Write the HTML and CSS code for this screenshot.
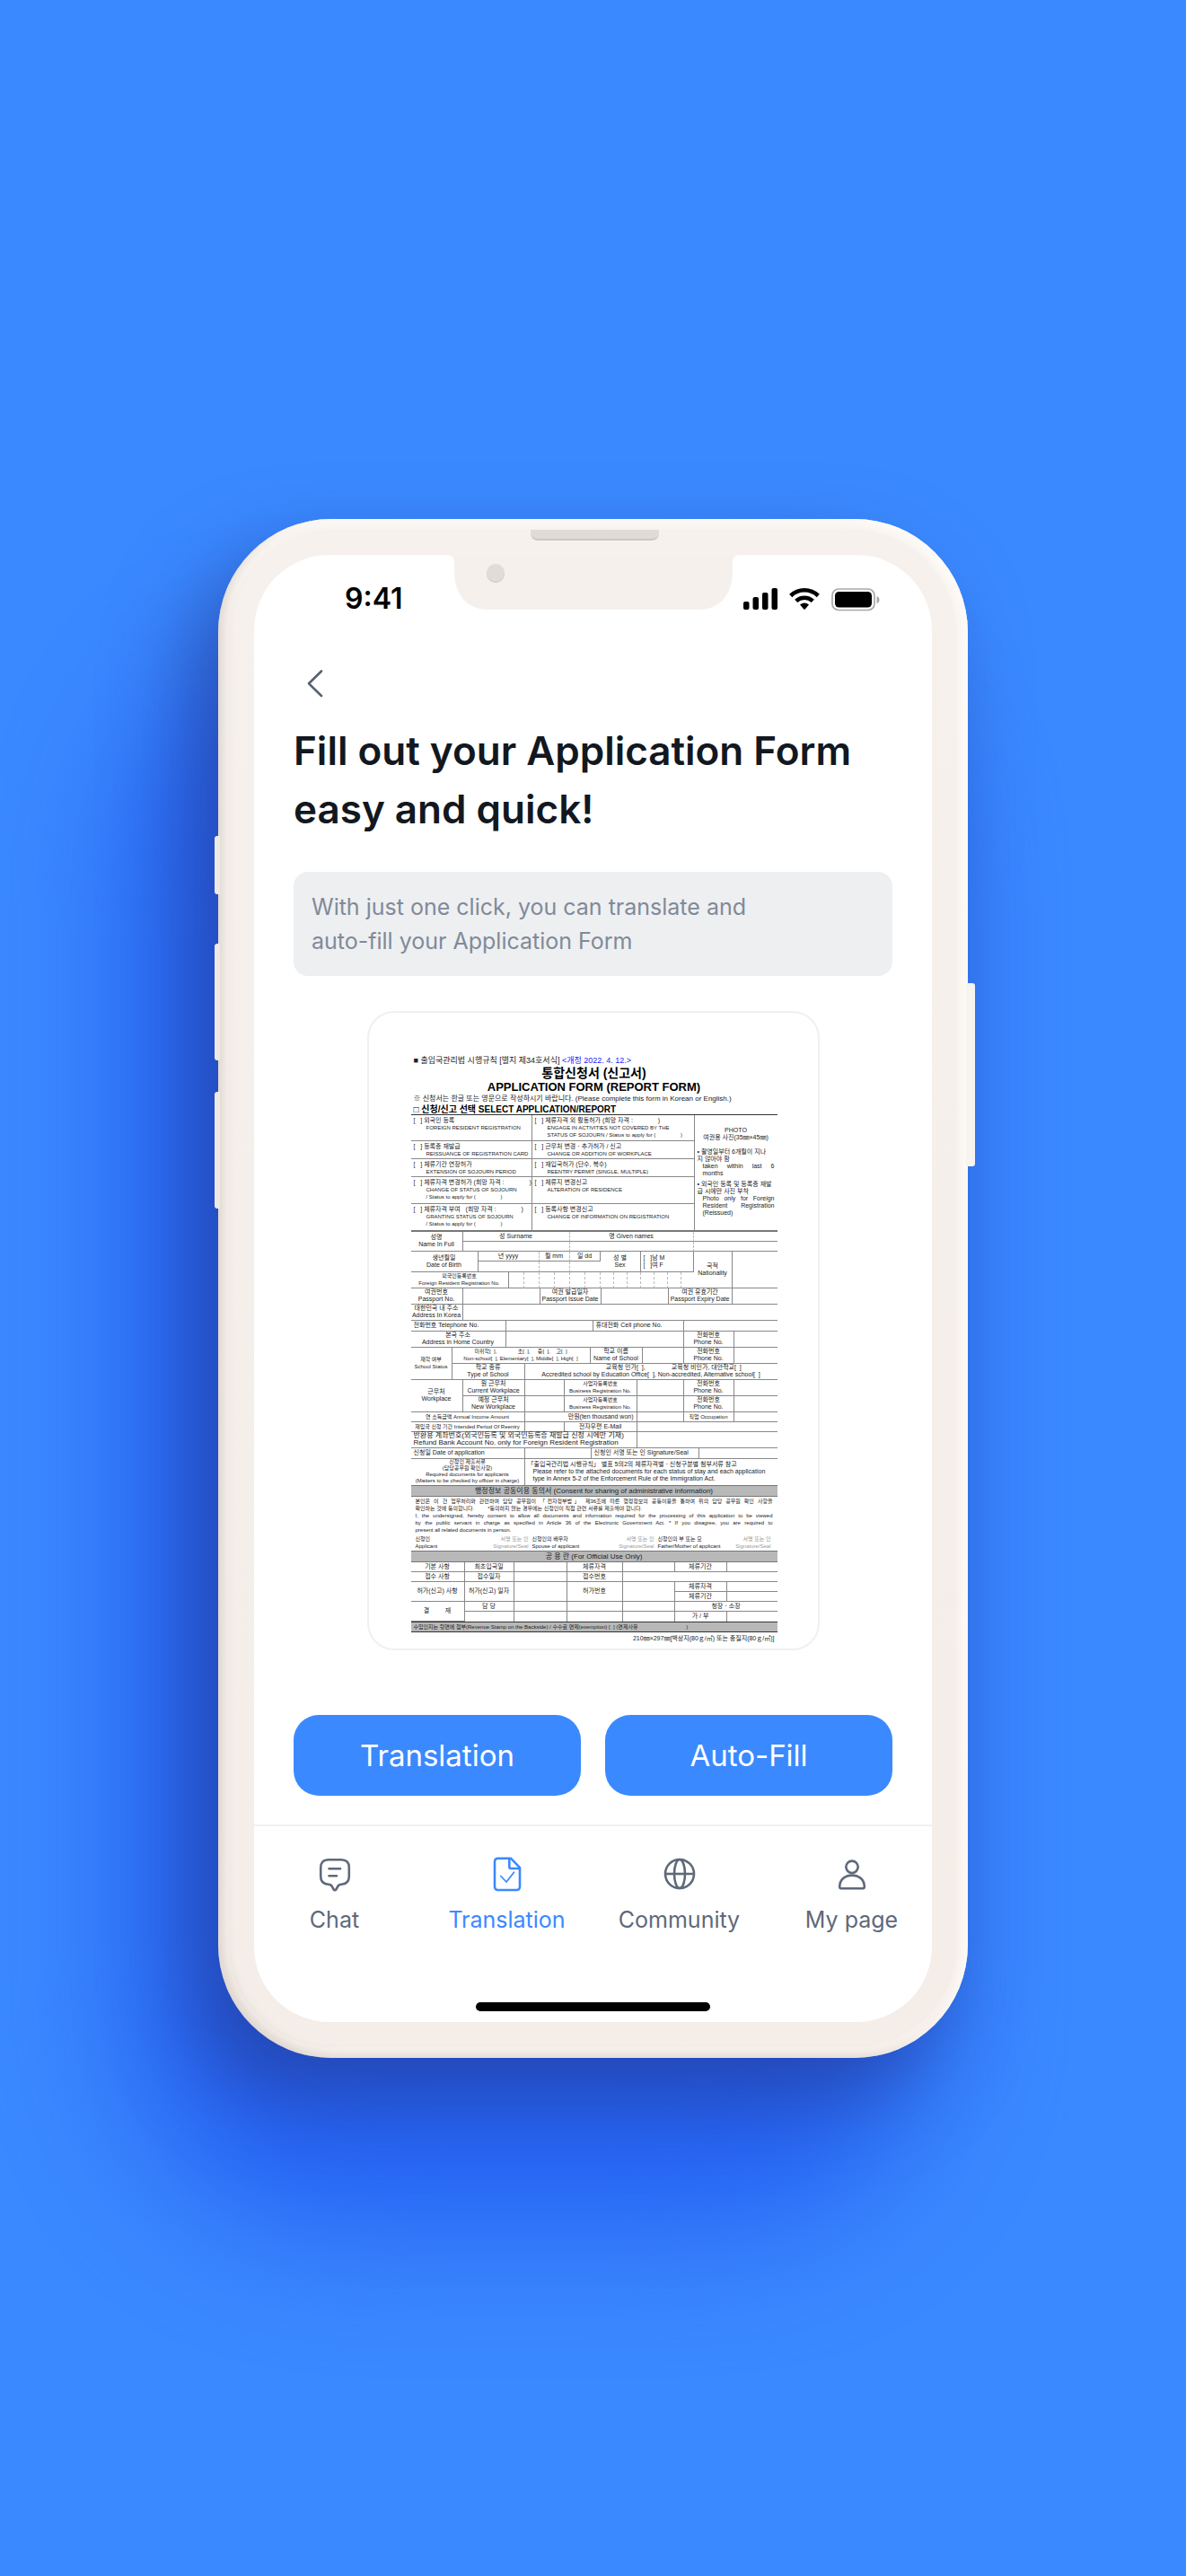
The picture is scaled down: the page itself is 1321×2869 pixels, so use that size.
FILE: index.html
```html
<!DOCTYPE html>
<html lang="en">
<head>
<meta charset="utf-8">
<title>Application Form</title>
<meta name="viewport" content="width=device-width, initial-scale=1">
<link rel="stylesheet" href="styles.css">
</head>
<body>
<div class="phone">
  <span class="side side-mute"></span>
  <span class="side side-up"></span>
  <span class="side side-down"></span>
  <span class="side side-power"></span>
  <span class="speaker"></span>
  <div class="screen">
    <header class="status">
      <time class="clock">9:41</time>
      <svg class="notch" viewBox="0 0 326 61" width="326" height="61" aria-hidden="true">
        <path fill="#f5f0ec" d="M0 0C5 0 8 3 8 9V18C8 44 22 61 46 61H280C304 61 318 44 318 18V9C318 3 321 0 326 0Z"/>
        <circle cx="54" cy="21" r="10" fill="#cbc7c4"/>
        <circle cx="54" cy="20" r="10" fill="#e0dcd9"/>
      </svg>
      <div class="signals">
        <svg width="38" height="24" viewBox="0 0 38 24" aria-hidden="true"><rect y="15" width="6.500" height="9" rx="2"/><rect x="10.500" y="10" width="6.500" height="14" rx="2"/><rect x="21" y="5" width="6.500" height="19" rx="2"/><rect x="31.500" width="6.500" height="24" rx="2"/></svg>
        <svg width="34" height="24" viewBox="0 0 34 24" aria-hidden="true"><g fill="none" stroke="#000" stroke-width="4.600"><path d="M1.700 8.500A22 22 0 0 1 32.300 8.500"/><path d="M7.700 14.400A13.500 13.500 0 0 1 26.300 14.400"/></g><path d="M12 18.500Q17 14.300 22 18.500L17.700 23.400Q17 24 16.300 23.400Z"/></svg>
        <svg width="54" height="26" viewBox="0 0 54 26" aria-hidden="true"><rect x="1" y="1" width="47" height="23.500" rx="7" fill="none" stroke="#a9a9a9" stroke-width="1.700"/><rect x="4" y="4" width="41" height="17.500" rx="4.500"/><path fill="#a9a9a9" d="M50.500 9Q53.500 10 53.500 13T50.500 17Z"/></svg>
      </div>
    </header>

    <main class="content">
      <button class="back" type="button" aria-label="Back">
        <svg width="20" height="32" viewBox="0 0 20 32" aria-hidden="true"><path d="M17 2.500 3 16.300 17 30" fill="none" stroke="#576171" stroke-width="2.600" stroke-linecap="round" stroke-linejoin="round"/></svg>
      </button>
      <h1>Fill out your Application Form<br>easy and quick!</h1>
      <p class="hint">With just one click, you can translate and<br>auto-fill your Application Form</p>

      <article class="sheet" lang="ko">
        <p class="legal"><b>■</b> 출입국관리법 시행규칙 [별지 제34호서식] <span class="rev">&lt;개정 2022. 4. 12.&gt;</span></p>
        <h2>통합신청서 (신고서)</h2>
        <h3>APPLICATION FORM (REPORT FORM)</h3>
        <p class="note">※ 신청서는 한글 또는 영문으로 작성하시기 바랍니다. (Please complete this form in Korean or English.)</p>
        <h4>□ 신청/신고 선택 SELECT APPLICATION/REPORT</h4>

        <table class="select">
          <colgroup><col class="w135"><col class="w181"><col class="w92"></colgroup>
          <tr class="h29"><td>[ &nbsp; ] 외국인 등록<small>FOREIGN RESIDENT REGISTRATION</small></td><td>[ &nbsp; ] 체류자격 외 활동허가 (희망 자격 : <i></i>)<small>ENGAGE IN ACTIVITIES NOT COVERED BY THE<br>STATUS OF SOJOURN / Status to apply for ( <i></i>)</small></td>
            <td rowspan="5" class="photo"><p class="mid">PHOTO<br>여권용 사진(35㎜×45㎜)</p><p>• 촬영일부터 6개월이 지나<br>지 않아야 함</p><p class="just">taken within last 6 months</p><p class="gap">• 외국인 등록 및 등록증 재발급 시에만 사진 부착</p><p class="just">Photo only for Foreign Resident Registration (Reissued)</p></td></tr>
          <tr class="h20"><td>[ &nbsp; ] 등록증 재발급<small>REISSUANCE OF REGISTRATION CARD</small></td><td>[ &nbsp; ] 근무처 변경ㆍ추가허가 / 신고<small>CHANGE OR ADDITION OF WORKPLACE</small></td></tr>
          <tr class="h20"><td>[ &nbsp; ] 체류기간 연장허가<small>EXTENSION OF SOJOURN PERIOD</small></td><td>[ &nbsp; ] 재입국허가 (단수, 복수)<small>REENTRY PERMIT (SINGLE, MULTIPLE)</small></td></tr>
          <tr class="h30"><td>[ &nbsp; ] 체류자격 변경허가 (희망 자격 : <i></i>)<small>CHANGE OF STATUS OF SOJOURN<br>/ Status to apply for ( <i></i>)</small></td><td>[ &nbsp; ] 체류지 변경신고<small>ALTERATION OF RESIDENCE</small></td></tr>
          <tr class="h31"><td>[ &nbsp; ] 체류자격 부여 &nbsp; (희망 자격 : <i></i>)<small>GRANTING STATUS OF SOJOURN<br>/ Status to apply for ( <i></i>)</small></td><td>[ &nbsp; ] 등록사항 변경신고<small>CHANGE OF INFORMATION ON REGISTRATION</small></td></tr>
        </table>

        <table>
          <colgroup><col class="w58"><col class="w17"><col class="w34"><col class="w17" span="6"><col class="w15" span="6"><col class="w14"><col class="w43"><col class="w50"></colgroup>
          <tr class="h11"><td rowspan="2">성명<br>Name In Full</td><td colspan="6" class="dash">성 Surname</td><td colspan="9" class="dash">명 Given names</td><td colspan="2"></td></tr>
          <tr class="h11"><td colspan="6" class="dash"></td><td colspan="9" class="dash"></td><td colspan="2"></td></tr>
          <tr class="h11"><td rowspan="2" colspan="2">생년월일<br>Date of Birth</td><td colspan="3" class="dash">년 yyyy</td><td colspan="2" class="dash">월 mm</td><td colspan="2">일 dd</td><td rowspan="2" colspan="3">성 별<br>Sex</td><td rowspan="2" colspan="4" class="left">[ &nbsp; ]남 M<br>[ &nbsp; ]여 F</td><td rowspan="3">국적<br>Nationality</td><td rowspan="3"></td></tr>
          <tr class="h12"><td colspan="3" class="dash"></td><td colspan="2" class="dash"></td><td colspan="2"></td></tr>
          <tr class="h18"><td colspan="3" class="tight">외국인등록번호<br>Foreign Resident Registration No.</td><td class="dash"></td><td class="dash"></td><td class="dash"></td><td class="dash"></td><td class="dash"></td><td class="dash"></td><td class="dash"></td><td class="dash"></td><td class="dash"></td><td class="dash"></td><td class="dash"></td><td class="dash"></td><td></td></tr>
        </table>

        <table>
          <colgroup><col class="w58"><col class="w86"><col class="w68"><col class="w75"><col class="w71"><col class="w50"></colgroup>
          <tr class="h18"><td>여권번호<br>Passport No.</td><td></td><td>여권 발급일자<br>Passport Issue Date</td><td></td><td>여권 유효기간<br>Passport Expiry Date</td><td></td></tr>
          <tr class="h18"><td>대한민국 내 주소<br>Address In Korea</td><td colspan="5"></td></tr>
        </table>

        <table>
          <colgroup><col class="w106"><col class="w97"><col class="w101"><col class="w56"><col class="w48"></colgroup>
          <tr class="h12"><td class="left">전화번호 Telephone No.</td><td></td><td class="left">휴대전화 Cell phone No.</td><td colspan="2"></td></tr>
          <tr class="h18"><td>본국 주소<br>Address in Home Country</td><td colspan="2"></td><td>전화번호<br>Phone No.</td><td></td></tr>
        </table>

        <table>
          <colgroup><col class="w46"><col class="w81"><col class="w73"><col class="w58"><col class="w46"><col class="w56"><col class="w48"></colgroup>
          <tr class="h18"><td rowspan="2" class="tight">재학 여부<br>School Status</td><td colspan="2" class="tight">미취학[ &nbsp;], &nbsp; &nbsp; &nbsp; &nbsp; &nbsp; &nbsp; &nbsp;초[ &nbsp;], &nbsp; &nbsp; 중[ &nbsp;], &nbsp; &nbsp;고[ &nbsp;]<br>Non-school[ &nbsp;], Elementary[ &nbsp;], Middle[ &nbsp;], High[ &nbsp;]</td><td>학교 이름<br>Name of School</td><td></td><td>전화번호<br>Phone No.</td><td></td></tr>
          <tr class="h18"><td>학교 종류<br>Type of School</td><td colspan="5">&nbsp; &nbsp; &nbsp; &nbsp; &nbsp; &nbsp; &nbsp; &nbsp; &nbsp; &nbsp; &nbsp; &nbsp; &nbsp; 교육청 인가[ &nbsp;], &nbsp; &nbsp; &nbsp; &nbsp; &nbsp; &nbsp; &nbsp; 교육청 비인가, 대안학교[ &nbsp;]<br>Accredited school by Education Office[ &nbsp;], Non-accredited, Alternative school[ &nbsp;]</td></tr>
        </table>

        <table>
          <colgroup><col class="w58"><col class="w69"><col class="w44"><col class="w81"><col class="w52"><col class="w56"><col class="w48"></colgroup>
          <tr class="h18"><td rowspan="2">근무처<br>Workplace</td><td>원 근무처<br>Current Workplace</td><td></td><td class="tight">사업자등록번호<br>Business Registration No.</td><td></td><td>전화번호<br>Phone No.</td><td></td></tr>
          <tr class="h18"><td>예정 근무처<br>New Workplace</td><td></td><td class="tight">사업자등록번호<br>Business Registration No.</td><td></td><td>전화번호<br>Phone No.</td><td></td></tr>
          <tr class="h11"><td colspan="2" class="tight">연 소득금액 Annual Income Amount</td><td colspan="2" class="right">만원(ten thousand won)</td><td></td><td class="tight">직업 Occupation</td><td></td></tr>
          <tr class="h11"><td colspan="2" class="tight">재입국 신청 기간 Intended Period Of Reentry</td><td></td><td>전자우편 E-Mail</td><td colspan="3"></td></tr>
          <tr class="h18"><td colspan="4" class="left wide">반환용 계좌번호(외국인등록 및 외국인등록증 재발급 신청 시에만 기재)<br>Refund Bank Account No. only for Foreign Resident Registration</td><td colspan="3"></td></tr>
        </table>

        <table class="bottomless">
          <colgroup><col class="w127"><col class="w74"><col class="w120"><col class="w87"></colgroup>
          <tr class="h12"><td class="left">신청일 Date of application</td><td></td><td class="left">신청인 서명 또는 인 Signature/Seal</td><td></td></tr>
          <tr class="h29"><td class="dense">신청인 제출서류<br>(담당공무원 확인사항)<br>Required documents for applicants<br>(Matters to be checked by officer in charge)</td><td colspan="3" class="left docs">「출입국관리법 시행규칙」 별표 5의2의 체류자격별ㆍ신청구분별 첨부서류 참고<br><span>Please refer to the attached documents for each status of stay and each application</span><br><span>type in Annex 5-2 of the Enforcement Rule of the Immigration Act.</span></td></tr>
        </table>

        <h5>행정정보 공동이용 동의서 (Consent for sharing of administrative information)</h5>
        <div class="consent">
          <p>본인은 이 건 업무처리와 관련하여 담당 공무원이 「전자정부법」 제36조에 따른 행정정보의 공동이용을 통하여 위의 담당 공무원 확인 사항을</p>
          <p class="loose">확인하는 것에 동의합니다. &nbsp; &nbsp; &nbsp; &nbsp; *동의하지 않는 경우에는 신청인이 직접 관련 서류를 제출해야 합니다.</p>
          <p>I, the undersigned, hereby consent to allow all documents and information required for the processing of this application to be viewed</p>
          <p>by the public servant in charge as specified in Article 36 of the Electronic Government Act. * If you disagree, you are required to</p>
          <p class="loose">present all related documents in person.</p>
          <div class="signers">
            <span>신청인<br>Applicant</span><em>서명 또는 인<br>Signature/Seal</em>
            <span>신청인의 배우자<br>Spouse of applicant</span><em>서명 또는 인<br>Signature/Seal</em>
            <span>신청인의 부 또는 모<br>Father/Mother of applicant</span><em>서명 또는 인<br>Signature/Seal</em>
          </div>
        </div>
        <h5>공 용 란 (For Official Use Only)</h5>

        <table class="bottomless">
          <colgroup><col class="w60"><col class="w55"><col class="w59"><col class="w62"><col class="w58"><col class="w58"><col class="w56"></colgroup>
          <tr class="h11"><td>기본 사항</td><td>최초입국일</td><td></td><td>체류자격</td><td></td><td>체류기간</td><td></td></tr>
          <tr class="h11"><td>접수 사항</td><td>접수일자</td><td></td><td>접수번호</td><td colspan="3"></td></tr>
          <tr class="h11"><td rowspan="2">허가(신고) 사항</td><td rowspan="2">허가(신고) 일자</td><td rowspan="2"></td><td rowspan="2">허가번호</td><td rowspan="2"></td><td>체류자격</td><td></td></tr>
          <tr class="h11"><td>체류기간</td><td></td></tr>
          <tr class="h11"><td rowspan="2">결 &nbsp; &nbsp; &nbsp; &nbsp; 재</td><td>담 당</td><td></td><td></td><td></td><td colspan="2">청장ㆍ소장</td></tr>
          <tr class="h11"><td></td><td></td><td></td><td></td><td>가 / 부</td><td></td></tr>
        </table>
        <p class="stamp">수입인지는 뒷면에 첨부(Revenue Stamp on the Backside) / 수수료 면제(exemption) [ &nbsp;] (면제사유 <i></i><i></i>)</p>
        <p class="paper">210㎜×297㎜[백상지(80ｇ/㎡) 또는 중질지(80ｇ/㎡)]</p>
      </article>

      <div class="actions">
        <button type="button">Translation</button>
        <button type="button">Auto-Fill</button>
      </div>
    </main>

    <nav class="tabs">
      <a href="#chat"><svg width="40" height="40" viewBox="0 0 40 40" aria-hidden="true"><path d="M13 4.300H27C33 4.300 35.800 7.500 35.800 13V23C35.800 29 33 31.500 27 31.700Q24 31.800 23 34.500L21.300 37.500Q20 38.800 18.700 37.500L17 34.500Q16 31.800 13 31.700C7 31.500 4.200 29 4.200 23V13C4.200 7.500 7 4.300 13 4.300Z"/><path d="M13.500 14.300H26M13.500 22.200H22" stroke-linecap="round"/></svg>Chat</a>
      <a href="#translation" class="on" aria-current="page"><svg width="40" height="40" viewBox="0 0 40 40" aria-hidden="true"><path d="M9.500 2.700H24L34 13V34.500A3.500 3.500 0 0 1 30.500 38H9.500A3.500 3.500 0 0 1 6 34.500V6.200A3.500 3.500 0 0 1 9.500 2.700Z"/><path d="M22.300 3V12A2 2 0 0 0 24.300 14H34"/><path d="M12.800 22.500 19 29 27.500 18.200" stroke-width="1.800" stroke-linecap="round" stroke-linejoin="round"/></svg>Translation</a>
      <a href="#community"><svg width="40" height="40" viewBox="0 0 40 40" aria-hidden="true"><circle cx="20" cy="20" r="16"/><ellipse cx="20" cy="20" rx="6" ry="16"/><path d="M4 20H36"/></svg>Community</a>
      <a href="#mypage"><svg width="40" height="40" viewBox="0 0 40 40" aria-hidden="true"><circle cx="20" cy="12.300" r="6.700"/><path d="M6.200 34.500C6.200 26.500 12 21.600 20 21.600S33.800 26.500 33.800 34.500Q33.800 36.200 32 36.200H8Q6.200 36.200 6.200 34.500Z"/></svg>My page</a>
    </nav>
    <div class="home"></div>
  </div>
</div>
</body>
</html>
```
FILE: styles.css
```css
* { box-sizing: border-box; margin: 0; padding: 0; }

body {
  min-height: 100vh;
  padding: 64px 16px;
  display: flex;
  align-items: center;
  justify-content: center;
  background: #3b89ff;
  font-family: Inter, "Noto Sans CJK KR", sans-serif;
  overflow-x: hidden;
}

/* Device */
.phone {
  position: relative;
  width: 100%;
  max-width: 835px;
  padding: 40px;
  border-radius: 126px;
  background: linear-gradient(#f6f1ed, #f4ede8);
  box-shadow:
    inset 0 0 0 12px rgba(255, 250, 246, .25),
    inset 10px -6px 12px -4px rgba(150, 135, 120, .35),
    inset -8px 6px 8px rgba(255, 252, 250, .7),
    -30px 44px 90px rgba(35, 55, 140, .6);
}

/* Soft glow cast down and to the left of the device */
.phone::before {
  content: "";
  position: absolute;
  z-index: -1;
  inset: 150px 50px -190px -100px;
  border-radius: 220px;
  background: #2057ef;
  opacity: .8;
  filter: blur(80px);
}

.side { position: absolute; width: 6px; border-radius: 3px 0 0 3px; background: #efe9e4; }
.side-mute { left: -4px; top: 353px; height: 65px; }
.side-up { left: -4px; top: 473px; height: 130px; }
.side-down { left: -4px; top: 638px; height: 130px; }
.side-power { right: -8px; top: 517px; width: 10px; height: 204px; border-radius: 0 3px 3px 0; background: #f7f3ef; }

.speaker {
  position: absolute;
  top: 12px;
  left: 50%;
  width: 143px;
  height: 12px;
  margin-left: -70px;
  border-radius: 0 0 8px 8px;
  border-bottom: 2px solid #cbc7c4;
  background: #dfdbd8;
}

.screen { border-radius: 84px; background: #fff; overflow: hidden; }

.status {
  display: grid;
  grid-template-columns: 1fr 326px 1fr;
  height: 96px;
}
.clock { padding: 29px 0 0 101px; font-size: 32px; line-height: 39px; font-weight: 600; }
.signals { display: flex; gap: 13px; padding: 37px 0 0 4px; }

/* Page content */
.content { display: flex; flex-direction: column; padding: 0 44px 32px; }
.back { align-self: flex-start; width: 48px; height: 64px; padding: 16px 14px; margin: 15px 0 11px; border: 0; background: none; }
h1 { font-size: 44px; line-height: 65px; font-weight: 600; color: #121820; white-space: nowrap; }
.hint {
  margin: 37px 0 39px;
  padding: 20px;
  border-radius: 16px;
  background: #eeeff1;
  color: #808a99;
  font-size: 25px;
  line-height: 38px;
}
.actions { display: grid; grid-template-columns: 1fr 1fr; gap: 27px; margin-top: 72px; }
.actions button {
  height: 90px;
  border: 0;
  border-radius: 28px;
  background: #3b89ff;
  color: #fff;
  font: 400 33px/40px Inter, sans-serif;
}

/* Application form sheet */
.sheet {
  align-self: center;
  width: 504px;
  height: 712px;
  padding: 48px 45px 0 47px;
  border: 2px solid #f0f0f1;
  border-radius: 30px;
  font: 7px/8px "Liberation Sans", "Noto Sans CJK KR", sans-serif;
  color: #222;
  white-space: nowrap;
}
.legal, .note { padding-left: 3px; }
.legal { font-size: 9px; line-height: 10px; }
.rev { color: #22f; }
.sheet h2 { font-size: 14px; line-height: 18px; text-align: center; color: #000; }
.sheet h3 { font-size: 13px; line-height: 14px; text-align: center; color: #000; }
.note { font-size: 8px; line-height: 12px; }
.sheet h4 { padding: 0 3px; font-size: 10px; line-height: 11px; color: #000; border-bottom: 1px solid #333; }

.sheet table { width: 100%; table-layout: fixed; border-collapse: separate; border-spacing: 0; }
.sheet td { border: solid #888; border-width: 0 1px 1px 0; text-align: center; vertical-align: middle; }
.sheet td:last-child { border-right: 0; }
.sheet td.dash { border-right: 1px dashed #bbb; }
.sheet td.left { padding-left: 3px; text-align: left; }
.sheet td.right { padding-right: 3px; text-align: right; }
.sheet .tight { font-size: 6px; }
.sheet .wide { font-size: 8px; }
.sheet .dense { font-size: 6px; line-height: 7px; }
.docs span { padding-left: 6px; }

.sheet .select td { padding: 2px 3px 0; text-align: left; vertical-align: top; }
.select td { line-height: 8px; }
.select small { display: block; padding-left: 14px; font-size: 6px; line-height: 8px; }
.select tr:last-child td, .sheet .select .photo { border-bottom: 2px solid #777; }
.select tr:first-child td:nth-child(2) { border-right: 1px solid #888; }
.select tr:not(:first-child) td:last-child { border-right: 1px solid #888; }
.select .photo p { white-space: normal; }
.sheet .select .photo { padding-top: 13px; }
.photo .mid { text-align: center; margin-bottom: 8px; }
.photo .gap { margin-top: 4px; }
.photo .just { padding-left: 6px; text-align: justify; }
.sheet i { display: inline-block; width: 26px; }

.h11 { height: 11px; }
.h12 { height: 12px; }
.h18 { height: 18px; }
.h20 { height: 20px; }
.h29 { height: 29px; }
.h30 { height: 30px; }
.h31 { height: 31px; }

.w14 { width: 14px; }
.w15 { width: 15px; }
.w17 { width: 17px; }
.w34 { width: 34px; }
.w43 { width: 43px; }
.w44 { width: 44px; }
.w46 { width: 46px; }
.w48 { width: 48px; }
.w50 { width: 50px; }
.w52 { width: 52px; }
.w55 { width: 55px; }
.w56 { width: 56px; }
.w58 { width: 58px; }
.w59 { width: 59px; }
.w60 { width: 60px; }
.w62 { width: 62px; }
.w68 { width: 68px; }
.w69 { width: 69px; }
.w71 { width: 71px; }
.w73 { width: 73px; }
.w74 { width: 74px; }
.w75 { width: 75px; }
.w81 { width: 81px; }
.w86 { width: 86px; }
.w87 { width: 87px; }
.w92 { width: 92px; }
.w97 { width: 97px; }
.w101 { width: 101px; }
.w106 { width: 106px; }
.w120 { width: 120px; }
.w127 { width: 127px; }
.w135 { width: 135px; }
.w181 { width: 181px; }

.sheet h5 {
  font-size: 8px;
  line-height: 11px;
  font-weight: 400;
  text-align: center;
  background: #b8b8b8;
  border: solid #777;
  border-width: 1px 0;
}
.bottomless tr:last-child td { border-bottom: 0; }
.consent { padding: 1px 5px 0; font-size: 6px; height: 60px; }
.consent p { text-align: justify; text-align-last: justify; }
.consent .loose { text-align-last: left; }
.signers { display: grid; grid-template-columns: 60px 70px 70px 70px 70px 60px; padding-top: 2px; }
.signers em { font-style: normal; color: #999; text-align: right; padding-right: 4px; }
.stamp { padding-left: 3px; font-size: 6px; line-height: 10px; background: #b8b8b8; border: solid #333; border-width: 1px 0; }
.paper { padding: 1px 3px; line-height: 11px; text-align: right; }

/* Bottom navigation */
.tabs {
  display: grid;
  grid-template-columns: repeat(4, 192px);
  justify-content: center;
  padding: 33px 0 73px;
  border-top: 2px solid #f0f1f2;
}
.tabs a {
  display: flex;
  flex-direction: column;
  align-items: center;
  gap: 12px;
  color: #5e697a;
  font-size: 25px;
  line-height: 38px;
  text-decoration: none;
}
.tabs svg { fill: none; stroke: currentColor; stroke-width: 2.6px; }
.tabs .on { color: #3b89ff; }
.home { width: 261px; height: 10px; margin: 0 auto 12px; border-radius: 5px; background: #000; }
```
